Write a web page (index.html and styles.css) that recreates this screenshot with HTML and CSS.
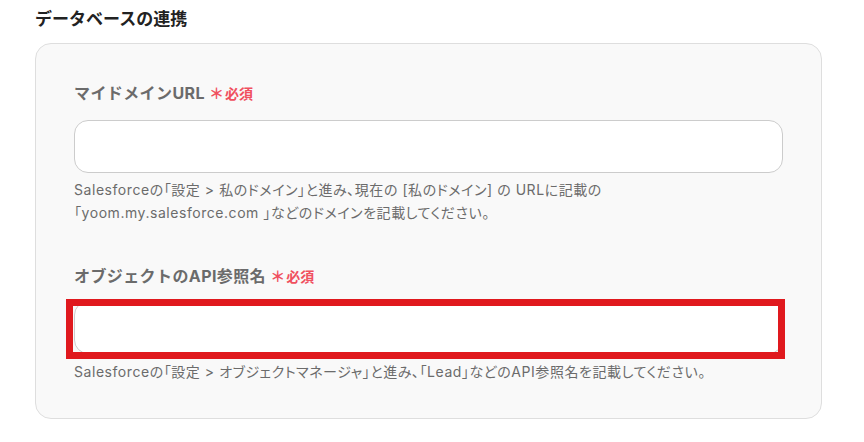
FILE: index.html
```html
<!DOCTYPE html>
<html lang="ja">
<head>
<meta charset="utf-8">
<link rel="stylesheet" href="styles.css">
</head>
<body>
<h2 class="title">データベースの連携</h2>
<div class="panel">
  <div class="field">
    <div class="label">マイドメインURL <span class="req"><span class="star">＊</span>必須</span></div>
    <div class="input"></div>
    <p class="help">Salesforceの「設定 &gt; 私のドメイン」と進み、現在の [私のドメイン] の URLに記載の<br>「yoom.my.salesforce.com 」などのドメインを記載してください。</p>
  </div>
  <div class="field field2">
    <div class="label">オブジェクトのAPI参照名 <span class="req"><span class="star">＊</span>必須</span></div>
    <div class="input-wrap">
      <div class="input"></div>
      <div class="highlight"></div>
    </div>
    <p class="help">Salesforceの「設定 &gt; オブジェクトマネージャ」と進み、「Lead」などのAPI参照名を記載してください。</p>
  </div>
</div>
</body>
</html>
```

FILE: styles.css
```css
html, body {
  margin: 0;
  padding: 0;
  background: #ffffff;
}
body {
  font-family: Inter, "Noto Sans CJK JP", sans-serif;
  color: #333;
}
.title {
  margin: 0;
  padding: 7px 0 0 35px;
  font-size: 17px;
  line-height: 24px;
  font-weight: 700;
  color: #222;
  height: 36px;
}
.panel {
  margin-left: 35px;
  width: 787px;
  height: 376px;
  border: 1px solid #dedede;
  border-radius: 16px;
  background: #f9f9f9;
  padding: 37px 38px 0 38px;
  box-sizing: border-box;
}
.field2 {
  margin-top: 40px;
}
.label {
  font-size: 16px;
  line-height: 24px;
  font-weight: 700;
  letter-spacing: 0.4px;
  color: #6b6b6b;
}
.req {
  color: #f0505f;
  font-size: 14px;
  letter-spacing: 0;
}
.star {
  font-size: 15px;
  margin-right: 1px;
}
.input {
  margin-top: 14px;
  height: 53px;
  box-sizing: border-box;
  border: 1px solid #cccccc;
  border-radius: 14px;
  background: #ffffff;
}
.input-wrap {
  position: relative;
  margin-top: 12px;
}
.field2 .input {
  margin-top: 0;
}
.highlight {
  position: absolute;
  left: -8px;
  right: -2px;
  top: -2px;
  height: 60px;
  box-sizing: border-box;
  border: 7px solid #e0191e;
}
.help {
  margin: 5px 0 0 0;
  font-size: 14px;
  line-height: 23px;
  letter-spacing: 0.55px;
  font-feature-settings: "palt";
  color: #6b6b6b;
  white-space: nowrap;
}
.field2 .help {
  margin-top: 6px;
}
```
